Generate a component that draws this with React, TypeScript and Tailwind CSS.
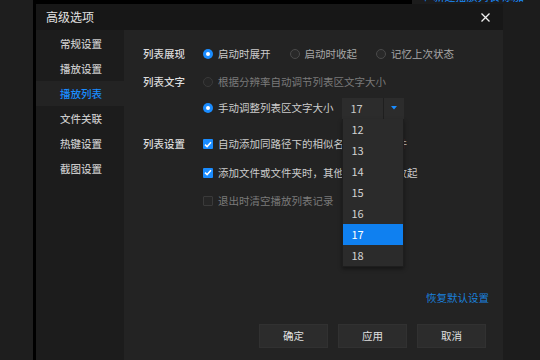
import React from "react";

const FONT = "font-['Noto_Sans_CJK_SC','Noto_Sans',sans-serif]";

function Radio({ on, disabled }: { on?: boolean; disabled?: boolean }) {
  if (on) {
    return (
      <span className="w-[10px] h-[10px] rounded-full bg-[#1a8cff] flex items-center justify-center shrink-0">
        <span className="w-[4px] h-[4px] rounded-full bg-white" />
      </span>
    );
  }
  return (
    <span
      className={
        "w-[10px] h-[10px] rounded-full border shrink-0 " +
        (disabled ? "border-[#3a3a3a] bg-[#262626]" : "border-[#4a4a4a] bg-[#292929]")
      }
    />
  );
}

function Check({ on }: { on?: boolean }) {
  if (on) {
    return (
      <span className="w-[10px] h-[10px] rounded-[1px] bg-[#1a8cff] flex items-center justify-center shrink-0">
        <svg width="8" height="7" viewBox="0 0 8 7">
          <path d="M1 3.6 L3.1 5.6 L7 1.2" stroke="white" strokeWidth="1.5" fill="none" />
        </svg>
      </span>
    );
  }
  return <span className="w-[10px] h-[10px] rounded-[1px] border border-[#3a3a3a] bg-[#262626] shrink-0" />;
}

function Opt({
  kind,
  on,
  disabled,
  dim,
  children,
}: {
  kind: "radio" | "check";
  on?: boolean;
  disabled?: boolean;
  dim?: boolean;
  children: React.ReactNode;
}) {
  return (
    <div className="flex items-center gap-[5px] whitespace-nowrap">
      {kind === "radio" ? <Radio on={on} disabled={disabled} /> : <Check on={on} />}
      <span className={disabled ? "text-[#7a7a7a]" : dim ? "text-[#a8a8a8]" : "text-[#cccccc]"}>{children}</span>
    </div>
  );
}

const sideItems = ["常规设置", "播放设置", "播放列表", "文件关联", "热键设置", "截图设置"];
const sizes = [12, 13, 14, 15, 16, 17, 18];

export default function App() {
  return (
    <div className={"w-[540px] h-[360px] overflow-hidden flex flex-col bg-[#1c1c1c] text-[10.5px] leading-[12px] " + FONT}>
      {/* top strip */}
      <div className="h-[4px] flex shrink-0">
        <div className="w-[33px] bg-[#1e1e1e]" />
        <div className="w-[379px] bg-black" />
        <div className="flex-1 overflow-hidden bg-[#1c1c1c] pl-[8px]">
          <div className="-mt-[10px] text-[#1a8cff] text-[11px] leading-[12px] whitespace-nowrap">↑ 新建播放列表 添加</div>
        </div>
      </div>
      <div className="flex-1 flex min-h-0">
        <div className="w-[33px] bg-[#1e1e1e]" />
        <div className="w-[3px] bg-black" />
        {/* dialog */}
        <div className="w-[467px] flex flex-col">
          <div className="h-[26px] bg-[#171717] flex items-center justify-between pl-[10px] pr-[13px] shrink-0">
            <span className="text-[12px] leading-[14px] text-[#e2e2e2]">高级选项</span>
            <svg width="9" height="9" viewBox="0 0 9 9">
              <path d="M0.5 0.5 L8.5 8.5 M8.5 0.5 L0.5 8.5" stroke="#f0f0f0" strokeWidth="1.3" />
            </svg>
          </div>
          <div className="flex-1 flex min-h-0">
            {/* sidebar */}
            <div className="w-[88px] bg-[#1c1c1c] pt-[1px] flex flex-col">
              {sideItems.map((s) => (
                <div
                  key={s}
                  className={
                    "h-[25px] flex items-center pl-[24px] font-medium " +
                    (s === "播放列表" ? "bg-[#232323] text-[#1a8cff]" : "text-[#c8c8c8]")
                  }
                >
                  {s}
                </div>
              ))}
            </div>
            {/* content */}
            <div className="flex-1 bg-[#232323] pl-[19px] pt-[11px] flex flex-col">
              {/* section 1 */}
              <div className="h-[26px] flex items-center">
                <div className="w-[60px] font-medium text-[#dcdcdc]">列表展现</div>
                <div className="flex items-center gap-[19px]">
                  <Opt kind="radio" on>启动时展开</Opt>
                  <Opt kind="radio" dim>启动时收起</Opt>
                  <Opt kind="radio" dim>记忆上次状态</Opt>
                </div>
              </div>
              {/* section 2 */}
              <div className="mt-[2px] grid grid-cols-[60px_1fr]">
                <div className="h-[26px] flex items-center font-medium text-[#dcdcdc]">列表文字</div>
                <div className="h-[26px] flex items-center">
                  <Opt kind="radio" disabled>根据分辨率自动调节列表区文字大小</Opt>
                </div>
                <div />
                <div className="h-[26px] flex items-center">
                  <Opt kind="radio" on>手动调整列表区文字大小</Opt>
                  <div className="relative ml-[8px] w-[62px] h-[21px] bg-[#2c2c2c] flex">
                    <div className="w-[41px] pl-[9px] flex items-center text-[11px] text-[#c8c8c8]">17</div>
                    <div className="w-[1px] bg-[#1f1f1f]" />
                    <div className="flex-1 flex items-center justify-center">
                      <svg width="6" height="4" viewBox="0 0 6 4">
                        <path d="M0 0 L6 0 L3 3.5 Z" fill="#1a8cff" />
                      </svg>
                    </div>
                    <div className="absolute left-0 top-full w-[62px] z-10 bg-[#2b2b2b] border-x border-b border-[#1e1e1e] shadow-[0_2px_4px_rgba(0,0,0,0.4)]">
                      {sizes.map((n) => (
                        <div
                          key={n}
                          className={
                            "h-[21px] flex items-center pl-[9px] text-[11px] " +
                            (n === 17 ? "bg-[#0f80f0] text-white" : "text-[#d2d2d2]")
                          }
                        >
                          {n}
                        </div>
                      ))}
                    </div>
                  </div>
                </div>
              </div>
              {/* section 3 */}
              <div className="mt-[9px] grid grid-cols-[60px_1fr]">
                <div className="h-[28px] flex items-center font-medium text-[#dcdcdc]">列表设置</div>
                <div className="h-[28px] flex items-center">
                  <Opt kind="check" on>自动添加同路径下的相似名称的视频文件</Opt>
                </div>
                <div />
                <div className="h-[29px] flex items-center">
                  <Opt kind="check" on>添加文件或文件夹时，其他列表项自动收起</Opt>
                </div>
                <div />
                <div className="h-[28px] flex items-center">
                  <Opt kind="check" disabled>退出时清空播放列表记录</Opt>
                </div>
              </div>
              {/* restore link */}
              <div className="mt-[77px] h-[12px] flex justify-end pr-[14px]">
                <span className="text-[#1a80dc]">恢复默认设置</span>
              </div>
              {/* buttons */}
              <div className="mt-[20px] flex justify-end gap-[10px] pr-[17px]">
                {["确定", "应用", "取消"].map((b) => (
                  <div
                    key={b}
                    className="w-[69px] h-[24px] bg-[#2c2c2c] border border-[#313131] flex items-center justify-center text-[#e0e0e0]"
                  >
                    {b}
                  </div>
                ))}
              </div>
            </div>
          </div>
        </div>
        <div className="flex-1 bg-[#1c1c1c]" />
      </div>
    </div>
  );
}
